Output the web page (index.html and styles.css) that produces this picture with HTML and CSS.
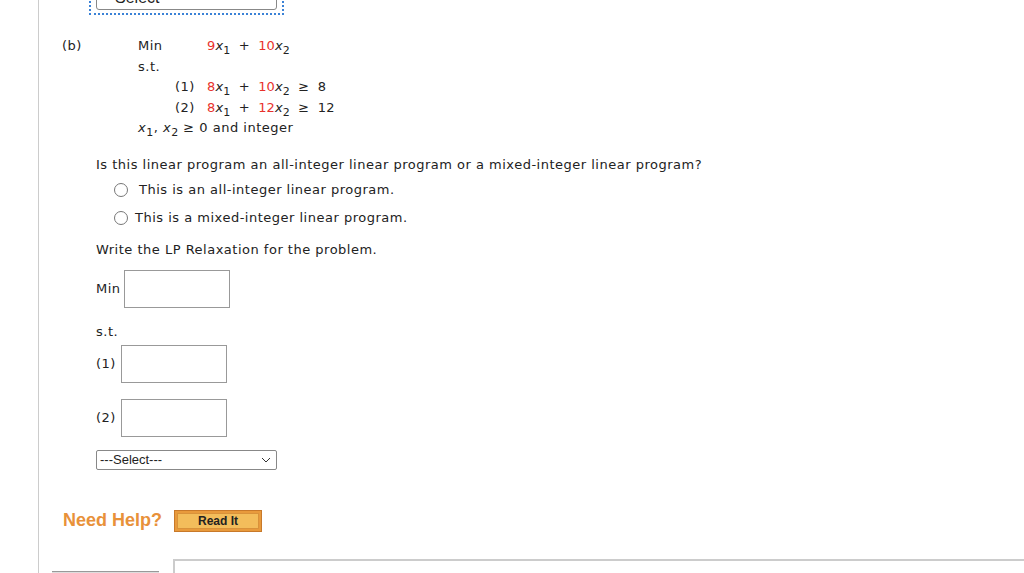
FILE: index.html
```html
<!DOCTYPE html>
<html lang="en">

<head>
    <meta charset="UTF-8">
    <title>LP Relaxation</title>
    <link rel="stylesheet" href="styles.css">
</head>

<body>
    <div class="page">
        <div class="top-select">
            <div class="focus">
                <div class="select-box">Select</div>
            </div>
        </div>

        <div class="part">
            <div class="part-label">(b)</div>
            <div class="lp">
                <div class="row">
                    <span class="key">Min</span>
                    <span class="expr"><b class="c">9</b><i>x</i><sub>1</sub> &nbsp;+&nbsp; <b class="c">10</b><i>x</i><sub>2</sub></span>
                </div>
                <div class="row"><span class="key">s.t.</span></div>
                <div class="row">
                    <span class="key num">(1)</span>
                    <span class="expr"><b class="c">8</b><i>x</i><sub>1</sub> &nbsp;+&nbsp; <b class="c">10</b><i>x</i><sub>2</sub> &nbsp;&ge;&nbsp; 8</span>
                </div>
                <div class="row">
                    <span class="key num">(2)</span>
                    <span class="expr"><b class="c">8</b><i>x</i><sub>1</sub> &nbsp;+&nbsp; <b class="c">12</b><i>x</i><sub>2</sub> &nbsp;&ge;&nbsp; 12</span>
                </div>
                <div class="row"><span><i>x</i><sub>1</sub>, <i>x</i><sub>2</sub> &ge; 0 and integer</span></div>
            </div>
        </div>

        <div class="question">
            <p class="q-text">Is this linear program an all-integer linear program or a mixed-integer linear program?</p>
            <label class="radio first"><span class="dot"></span>This is an all-integer linear program.</label>
            <label class="radio"><span class="dot"></span>This is a mixed-integer linear program.</label>
            <p class="q-text write">Write the LP Relaxation for the problem.</p>

            <div class="field min-field">
                <span>Min</span>
                <span class="box"></span>
            </div>
            <p class="st">s.t.</p>
            <div class="field c1">
                <span>(1)</span>
                <span class="box"></span>
            </div>
            <div class="field c2">
                <span>(2)</span>
                <span class="box"></span>
            </div>
            <div class="select">
                <span>---Select---</span>
                <svg width="10" height="6" viewBox="0 0 10 6"><path d="M1 1 L5 5 L9 1" fill="none" stroke="#333" stroke-width="1"/></svg>
            </div>
        </div>

        <div class="help">
            <span class="need">Need Help?</span>
            <span class="read"><span class="read-in">Read It</span></span>
        </div>

        <div class="bottom">
            <div class="tab"></div>
            <div class="panel"></div>
        </div>
    </div>
</body>

</html>
```

FILE: styles.css
```css
* {
    padding: 0;
    margin: 0;
    box-sizing: border-box;
}

body {
    font-family: "DejaVu Sans", Verdana, sans-serif;
    font-size: 13px;
    letter-spacing: 0.5px;
    color: #222;
    background: #fff;
    overflow: hidden;
}

.page {
    display: flow-root;
    margin-left: 38px;
    border-left: 1px solid #ccc;
    height: 573px;
}

/* select cut off at the top */
.top-select {
    height: 15px;
    padding-left: 50px;
    margin-top: -16px;
}

.focus {
    width: 195px;
    height: 31px;
    border: 2px dotted #3b82d6;
    padding: 3px 5px;
}

.select-box {
    height: 21px;
    border: 1px solid #888;
    border-radius: 3px;
    font-family: "Liberation Sans", Arial, sans-serif;
    font-size: 16px;
    letter-spacing: 0;
    padding-left: 18px;
    line-height: 16px;
}

.part {
    display: flex;
    margin-top: 37px;
    line-height: 20.5px;
}

.part-label {
    width: 99px;
    padding-left: 23px;
}

.lp .row {
    display: flex;
    height: 20.5px;
}

.lp .key {
    width: 69px;
}

.lp .key.num {
    width: 69px;
    padding-left: 37px;
}

.lp .expr {
    letter-spacing: 0.1px;
}

.c {
    color: #e8312b;
    font-weight: normal;
}

sub {
    font-size: 11px;
    vertical-align: -4px;
    line-height: 0;
}

.question {
    padding-left: 57px;
    margin-top: 18px;
}

.q-text {
    line-height: 16px;
}

.radio {
    display: flex;
    align-items: center;
    height: 28px;
    padding-left: 18px;
}

.radio.first {
    margin-top: 3px;
}

.dot {
    width: 14px;
    height: 14px;
    border: 1px solid #777;
    border-radius: 50%;
    margin-right: 7px;
}

.radio.first .dot {
    margin-right: 11px;
}

.write {
    margin-top: 10px;
}

.field {
    display: flex;
    align-items: center;
    gap: 5px;
}

.box {
    display: block;
    width: 106px;
    height: 38px;
    border: 1px solid #999;
}

.min-field {
    margin-top: 12px;
    gap: 3px;
}

.st {
    margin-top: 16px;
    line-height: 16px;
}

.c1 {
    margin-top: 5px;
}

.c2 {
    margin-top: 16px;
}

.select {
    display: flex;
    justify-content: space-between;
    align-items: center;
    width: 181px;
    height: 20px;
    margin-top: 13px;
    border: 1px solid #888;
    border-radius: 2px;
    padding: 0 5px 0 3px;
    font-family: "Liberation Sans", Arial, sans-serif;
    letter-spacing: 0;
    font-size: 13px;
    color: #222;
}

.help {
    display: flex;
    align-items: center;
    gap: 12px;
    margin-top: 40px;
    padding-left: 24px;
}

.need {
    font-family: "Liberation Sans", Arial, sans-serif;
    letter-spacing: 0;
    font-weight: bold;
    font-size: 18px;
    color: #e8913a;
}

.read {
    display: block;
    width: 88px;
    height: 22px;
    background: #e89a3c;
    padding: 2px;
    border: 1px solid #c8792a;
}

.read-in {
    display: block;
    height: 100%;
    background: #f3bd5b;
    border: 1px solid #d9923a;
    text-align: center;
    font-family: "Liberation Sans", Arial, sans-serif;
    letter-spacing: 0;
    font-weight: bold;
    font-size: 12px;
    line-height: 14px;
    color: #222;
}

.bottom {
    display: flex;
    align-items: flex-start;
    margin-top: 27px;
}

.tab {
    width: 107px;
    height: 10px;
    margin: 12px 0 0 13px;
    background: #ddd;
    border-top: 1px solid #999;
}

.panel {
    flex: 1;
    height: 30px;
    margin-left: 14px;
    border-top: 2px solid #ccc;
    border-left: 2px solid #ccc;
}
```
